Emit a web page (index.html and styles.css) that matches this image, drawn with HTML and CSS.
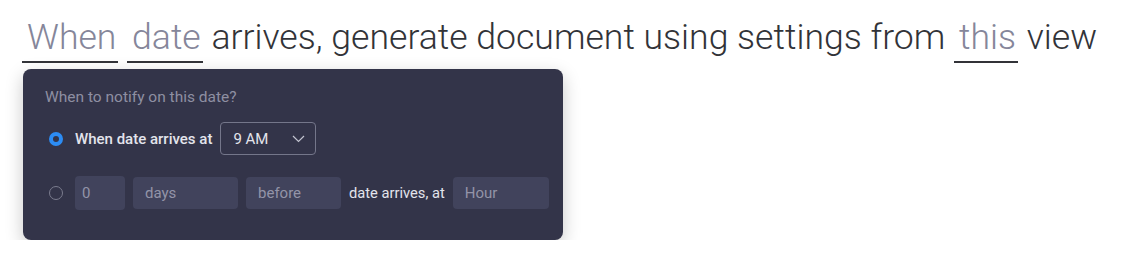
FILE: index.html
```html
<!DOCTYPE html>
<html lang="en">
<head>
    <meta charset="UTF-8">
    <title>Date automation</title>
    <link rel="stylesheet" href="styles.css">
</head>
<body>
    <div class="recipe">
        <div class="sentence">
            <span class="pick">When</span> <span class="pick">date</span> arrives, generate document using settings from <span class="pick">this</span> view
        </div>

        <div class="notify-panel">
            <div class="panel-title">When to notify on this date?</div>

            <div class="option-row">
                <span class="radio checked"></span>
                <span class="option-label strong">When date arrives at</span>
                <div class="time-select">
                    <span>9 AM</span>
                    <svg width="13" height="8" viewBox="0 0 13 8">
                        <polyline points="1,1 6.5,6.5 12,1" fill="none" stroke="#c3c4d0" stroke-width="1.2"/>
                    </svg>
                </div>
            </div>

            <div class="option-row">
                <span class="radio"></span>
                <div class="field field-num">0</div>
                <div class="field field-unit">days</div>
                <div class="field field-when">before</div>
                <span class="option-label">date arrives, at</span>
                <div class="field field-hour">Hour</div>
            </div>
        </div>
    </div>
</body>
</html>
```

FILE: styles.css
```css
body {
    margin: 0;
    background-color: #fff;
    font-family: Roboto, "Liberation Sans", sans-serif;
}

.recipe {
    padding: 0 0 0 22px;
}

.sentence {
    font-size: 35.6px;
    font-weight: 300;
    color: #323338;
    padding-top: 16px;
    white-space: nowrap;
}

.pick {
    display: inline-block;
    color: #85869a;
    padding: 0 2px 3px 5px;
    border-bottom: 2px solid #323338;
}

.notify-panel {
    width: 540px;
    box-sizing: border-box;
    margin: 6px 0 0 1px;
    padding: 18px 22px 30px 22px;
    background-color: #333449;
    border-radius: 8px;
    box-shadow: 0 6px 18px rgba(0, 0, 0, 0.22);
}

.panel-title {
    font-size: 15.5px;
    line-height: 20px;
    color: #8e8fa2;
}

.option-row {
    display: flex;
    align-items: center;
    gap: 8px;
    margin-top: 15px;
    white-space: nowrap;
}

.option-row + .option-row {
    margin-top: 21px;
}

.radio {
    flex: none;
    width: 14px;
    height: 14px;
    box-sizing: border-box;
    border-radius: 50%;
    border: 1px solid #7b7c8e;
    margin: 0 4px 0 4px;
}

.radio.checked {
    border: 4px solid #2c8cf4;
}

.option-label {
    font-size: 14.7px;
    color: #e3e4ec;
}

.option-label.strong {
    font-size: 15px;
    font-weight: 500;
}

.time-select {
    flex: none;
    display: flex;
    align-items: center;
    justify-content: space-between;
    width: 96px;
    height: 33px;
    box-sizing: border-box;
    padding: 0 10px 0 12px;
    border: 1px solid #74768a;
    border-radius: 4px;
    font-size: 15px;
    color: #e3e4ec;
}

.field {
    flex: none;
    height: 32px;
    box-sizing: border-box;
    padding: 0 12px;
    display: flex;
    align-items: center;
    background-color: #41435c;
    border-radius: 4px;
    font-size: 15px;
    color: #9394a8;
}

.field-num {
    width: 50px;
    height: 34px;
    padding: 0 7px;
}

.field-unit {
    width: 105px;
}

.field-when {
    width: 95px;
}

.field-hour {
    width: 96px;
}
```
